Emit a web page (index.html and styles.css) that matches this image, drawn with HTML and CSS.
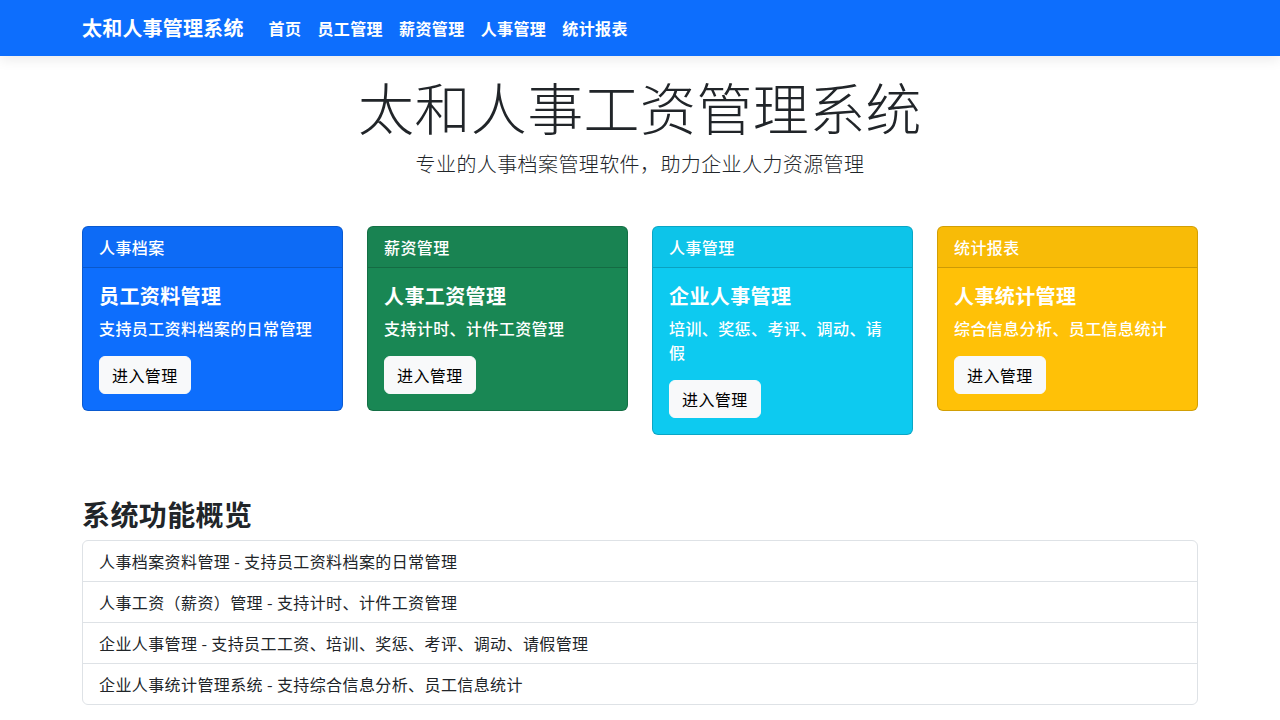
FILE: index.html
```html
<!DOCTYPE html>
<html lang="zh-CN">
<head>
<meta charset="utf-8">
<title>太和人事管理系统</title>
<link rel="stylesheet" href="styles.css">
</head>
<body>
<nav class="navbar">
  <div class="container nav-inner">
    <a class="brand" href="#">太和人事管理系统</a>
    <ul class="nav-links">
      <li><a href="#">首页</a></li>
      <li><a href="#">员工管理</a></li>
      <li><a href="#">薪资管理</a></li>
      <li><a href="#">人事管理</a></li>
      <li><a href="#">统计报表</a></li>
    </ul>
  </div>
</nav>

<main class="container">
  <header class="hero">
    <h1 class="hero-title">太和人事工资管理系统</h1>
    <p class="hero-lead">专业的人事档案管理软件，助力企业人力资源管理</p>
  </header>

  <section class="cards">
    <div class="card card-primary">
      <div class="card-header">人事档案</div>
      <div class="card-body">
        <h5 class="card-title">员工资料管理</h5>
        <p class="card-text">支持员工资料档案的日常管理</p>
        <a class="btn" href="#">进入管理</a>
      </div>
    </div>
    <div class="card card-success">
      <div class="card-header">薪资管理</div>
      <div class="card-body">
        <h5 class="card-title">人事工资管理</h5>
        <p class="card-text">支持计时、计件工资管理</p>
        <a class="btn" href="#">进入管理</a>
      </div>
    </div>
    <div class="card card-info">
      <div class="card-header">人事管理</div>
      <div class="card-body">
        <h5 class="card-title">企业人事管理</h5>
        <p class="card-text">培训、奖惩、考评、调动、请<br>假</p>
        <a class="btn" href="#">进入管理</a>
      </div>
    </div>
    <div class="card card-warning">
      <div class="card-header">统计报表</div>
      <div class="card-body">
        <h5 class="card-title">人事统计管理</h5>
        <p class="card-text">综合信息分析、员工信息统计</p>
        <a class="btn" href="#">进入管理</a>
      </div>
    </div>
  </section>

  <section class="overview">
    <h3 class="overview-title">系统功能概览</h3>
    <ul class="list-group">
      <li class="list-item">人事档案资料管理 - 支持员工资料档案的日常管理</li>
      <li class="list-item">人事工资（薪资）管理 - 支持计时、计件工资管理</li>
      <li class="list-item">企业人事管理 - 支持员工工资、培训、奖惩、考评、调动、请假管理</li>
      <li class="list-item">企业人事统计管理系统 - 支持综合信息分析、员工信息统计</li>
    </ul>
  </section>
</main>
</body>
</html>
```

FILE: styles.css
```css
* { box-sizing: border-box; }

html, body {
  margin: 0;
  padding: 0;
}

body {
  font-family: "Noto Sans CJK SC", "Noto Sans", "Liberation Sans", sans-serif;
  font-size: 16px;
  line-height: 1.5;
  letter-spacing: 0.4px;
  color: #212529;
  background: #fff;
}

a { text-decoration: none; }

.container {
  width: 1140px;
  margin: 0 auto;
  padding: 0 12px;
}

/* Navbar */
.navbar {
  height: 56px;
  background: #0d6efd;
  box-shadow: 0 4px 12px rgba(0, 0, 0, 0.08);
  position: relative;
  z-index: 1;
}

.nav-inner {
  display: flex;
  align-items: center;
  height: 56px;
}

.brand {
  color: #fff;
  font-size: 20px;
  font-weight: 700;
  line-height: 30px;
  letter-spacing: 0.2px;
  margin-right: 17px;
}

.nav-links {
  display: flex;
  list-style: none;
  margin: 0;
  padding: 0;
}

.nav-links a {
  display: block;
  color: #fff;
  font-size: 16px;
  font-weight: 700;
  padding: 8px 8px;
  line-height: 24px;
}

/* Hero */
.hero {
  text-align: center;
  padding-top: 16px;
}

.hero-title {
  margin: 0 0 10px;
  font-size: 56px;
  font-weight: 300;
  line-height: 1.2;
  letter-spacing: 0.4px;
  color: #212529;
}

.hero-lead {
  margin: 0;
  font-size: 20px;
  font-weight: 300;
  line-height: 30px;
  color: #212529;
}

/* Cards */
.cards {
  display: grid;
  grid-template-columns: repeat(4, 1fr);
  column-gap: 24px;
  align-items: start;
  margin-top: 47px;
}

.card {
  border: 1px solid rgba(0, 0, 0, 0.175);
  border-radius: 6px;
  color: #fff;
  overflow: hidden;
}

.card-primary { background: #0d6efd; }
.card-success { background: #198754; }
.card-info { background: #0dcaf0; }
.card-warning { background: #ffc107; }

.card-header {
  padding: 8px 16px;
  line-height: 24px;
  background: rgba(33, 37, 41, 0.03);
  border-bottom: 1px solid rgba(0, 0, 0, 0.175);
  font-weight: 500;
}

.card-body {
  padding: 16px;
}

.card-title {
  margin: 0 0 8px;
  font-size: 20px;
  font-weight: 700;
  line-height: 24px;
}

.card-text {
  margin: 0 0 16px;
  font-weight: 500;
}

.btn {
  display: inline-block;
  padding: 6px 12px;
  line-height: 24px;
  font-size: 16px;
  color: #000;
  background: #f8f9fa;
  border: 1px solid #f8f9fa;
  border-radius: 6px;
}

/* Overview */
.overview {
  margin-top: 63px;
}

.overview-title {
  margin: 0 0 8px;
  font-size: 28px;
  font-weight: 700;
  line-height: 1.2;
  color: #212529;
}

.list-group {
  list-style: none;
  margin: 0;
  padding: 0;
  border: 1px solid #dee2e6;
  border-radius: 6px;
}

.list-item {
  padding: 8px 16px;
  line-height: 24px;
  color: #212529;
  border-top: 1px solid #dee2e6;
}

.list-item:first-child { border-top: 0; }
```
